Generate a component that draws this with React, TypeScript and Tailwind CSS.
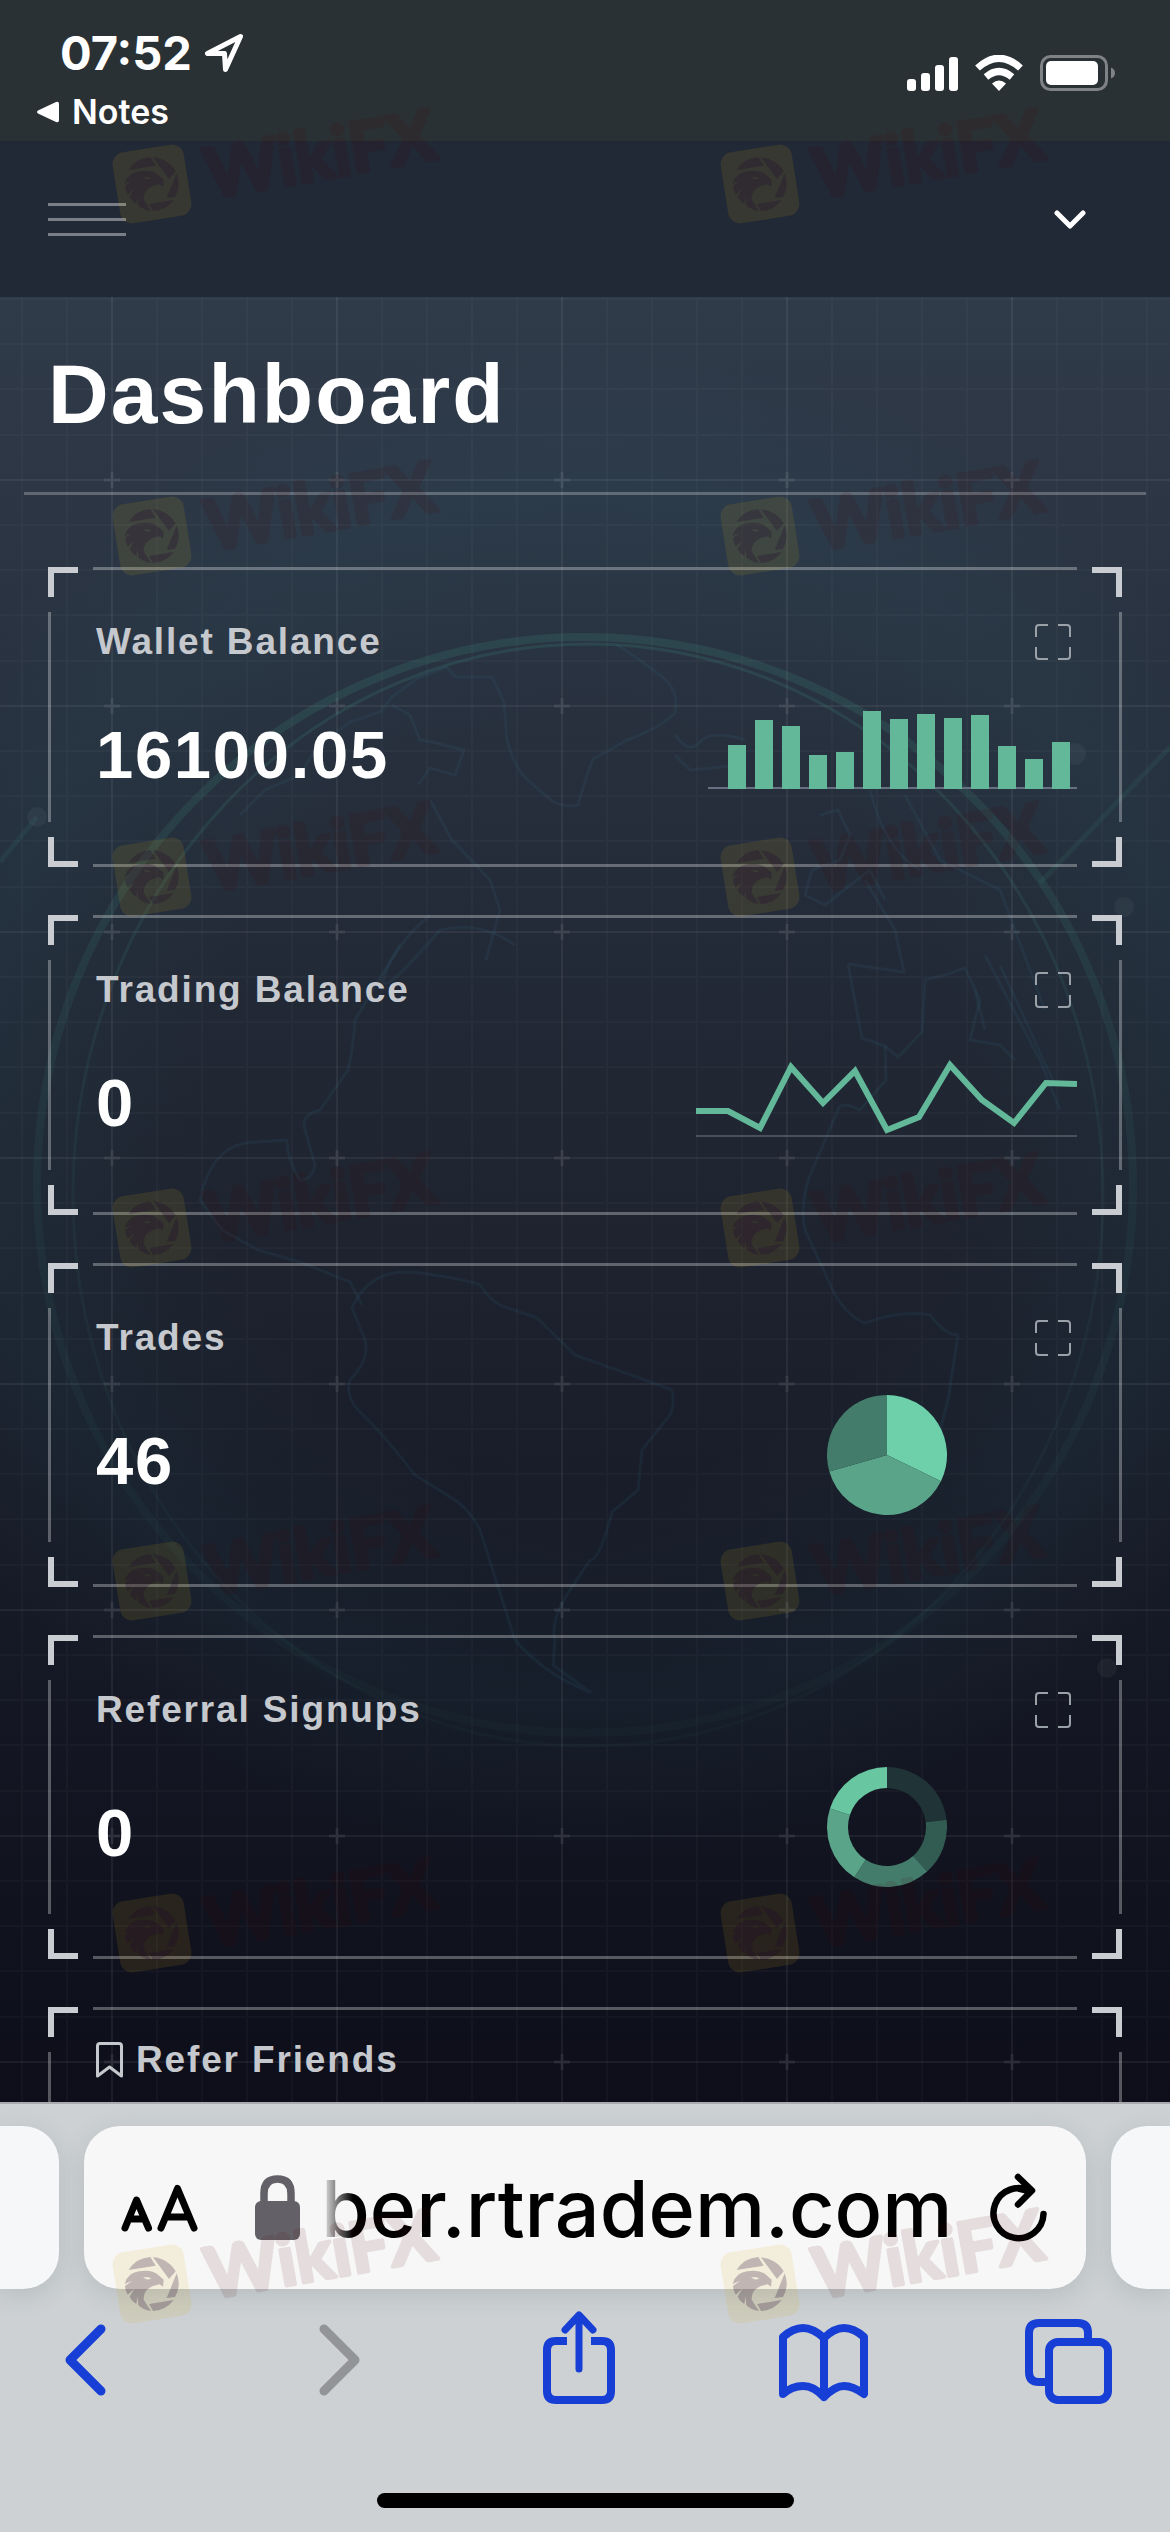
import React from "react";

const BAR_HEIGHTS = [44, 69, 63, 34, 37, 78, 70, 75, 71, 74, 43, 30, 47];

const WATERMARK_ROWS = [184, 536, 877, 1228, 1581, 1933, 2284];

function polar(r: number, deg: number) {
  const a = ((deg - 90) * Math.PI) / 180;
  return `${60 + r * Math.cos(a)} ${60 + r * Math.sin(a)}`;
}

function slice(from: number, to: number, inner: number) {
  const big = to - from > 180 ? 1 : 0;
  const outerArc = `M${polar(60, from)} A60 60 0 ${big} 1 ${polar(60, to)}`;
  if (inner === 0) return `${outerArc} L60 60 Z`;
  return `${outerArc} L${polar(inner, to)} A${inner} ${inner} 0 ${big} 0 ${polar(inner, from)} Z`;
}

function BarChart() {
  return (
    <svg className="block h-[90px] w-[381px]" viewBox="0 0 381 90" role="img" aria-label="Wallet balance history">
      <rect x="12" y="88" width="369" height="2" fill="#667080" />
      {BAR_HEIGHTS.map((h, i) => (
        <rect key={i} x={32 + i * 27} y={90 - h} width="18" height={h} fill="#62b899" />
      ))}
    </svg>
  );
}

function LineChart() {
  return (
    <svg className="block h-[90px] w-[381px]" viewBox="0 0 381 90" role="img" aria-label="Trading balance history">
      <rect x="0" y="88" width="381" height="2" fill="#4a515c" />
      <polyline
        points="0,64 32,64 64,81 95,20 127,56 159,24 191,83 223,70 254,18 286,53 318,76 350,36 381,37"
        fill="none"
        stroke="#62b899"
        strokeWidth="6"
      />
    </svg>
  );
}

function PieChart() {
  return (
    <svg className="block size-[120px]" viewBox="0 0 120 120" role="img" aria-label="Trades split">
      <path d={slice(0, 116, 0)} fill="#6ed0aa" />
      <path d={slice(116, 254, 0)} fill="#5aa489" />
      <path d={slice(254, 360, 0)} fill="#447c6b" />
    </svg>
  );
}

function DonutChart() {
  return (
    <svg className="block size-[120px]" viewBox="0 0 120 120" role="img" aria-label="Referral signups split">
      <path d={slice(0, 83, 39)} fill="#203336" />
      <path d={slice(83, 138, 39)} fill="#325c52" />
      <path d={slice(138, 213, 39)} fill="#447c6b" />
      <path d={slice(213, 288, 39)} fill="#5aa489" />
      <path d={slice(288, 360, 39)} fill="#68c6a1" />
    </svg>
  );
}

function CardFrame() {
  return (
    <div aria-hidden="true" className="pointer-events-none absolute inset-0">
      <i className="absolute inset-x-[45px] top-0 h-[3px] bg-white/30" />
      <i className="absolute inset-x-[45px] bottom-0 h-[3px] bg-white/30" />
      <i className="absolute inset-y-[45px] left-0 w-[3px] bg-white/30" />
      <i className="absolute inset-y-[45px] right-0 w-[3px] bg-white/30" />
      <i className="absolute left-0 top-0 size-[30px] border-l-[6px] border-t-[6px] border-[#c9cdd1]" />
      <i className="absolute right-0 top-0 size-[30px] border-r-[6px] border-t-[6px] border-[#c9cdd1]" />
      <i className="absolute bottom-0 left-0 size-[30px] border-b-[6px] border-l-[6px] border-[#c9cdd1]" />
      <i className="absolute bottom-0 right-0 size-[30px] border-b-[6px] border-r-[6px] border-[#c9cdd1]" />
    </div>
  );
}

function StatCard({
  title,
  value,
  tall,
  chart,
}: {
  title: string;
  value: string;
  tall?: boolean;
  chart: React.ReactNode;
}) {
  return (
    <section className="relative pt-12 pr-[45px] pb-[72px] pl-12">
      <CardFrame />
      <div className="flex items-center justify-between">
        <h2 className="text-[37px] leading-[54px] font-bold tracking-wider text-[#c5c8cd]">{title}</h2>
        <button type="button" aria-label={`Expand ${title}`} className="mr-[6px] size-9">
          <svg viewBox="0 0 36 36" className="size-9" fill="none" stroke="#9ba1a8" strokeWidth="2">
            <path d="M1 13V4q0-3 3-3h9M23 1h9q3 0 3 3v9M35 23v9q0 3-3 3h-9M13 35H4q-3 0-3-3v-9" />
          </svg>
        </button>
      </div>
      <div className={tall ? "mt-[30px] flex h-[120px] items-start justify-between" : "mt-[30px] flex h-24 items-start justify-between"}>
        <p className={tall ? "mt-[30px] text-[67px] leading-[72px] font-bold tracking-wide text-white" : "mt-5 text-[67px] leading-[72px] font-bold tracking-wide text-white"}>
          {value}
        </p>
        <div className="flex w-[381px] justify-center">{chart}</div>
      </div>
    </section>
  );
}

function Backdrop() {
  return (
    <svg aria-hidden="true" className="pointer-events-none absolute left-0 top-0 h-[1805px] w-full" viewBox="0 297 1170 1805" preserveAspectRatio="xMidYMin slice">
      <defs>
        <pattern id="grid" x="0" y="0" width="225" height="226" patternUnits="userSpaceOnUse">
          <path
            d="M0 73H225M0 118H225M0 163H225M0 209H225M22 0V226M67 0V226M157 0V226M202 0V226"
            stroke="#fff"
            strokeOpacity="0.025"
            strokeWidth="2"
          />
          <path d="M0 28H225M112 0V226" stroke="#fff" strokeOpacity="0.06" strokeWidth="2" />
          <path d="M104 28H120M112 20V36" stroke="#fff" strokeOpacity="0.07" strokeWidth="3" />
        </pattern>
        <linearGradient id="rim" x1="0" y1="0" x2="0" y2="1">
          <stop offset="0" stopColor="#3fa48c" stopOpacity="0.16" />
          <stop offset="0.5" stopColor="#3fa48c" stopOpacity="0.07" />
          <stop offset="1" stopColor="#3fa48c" stopOpacity="0.03" />
        </linearGradient>
        <radialGradient id="glow">
          <stop offset="0.5" stopColor="#2f8090" stopOpacity="0" />
          <stop offset="0.8" stopColor="#2f8090" stopOpacity="0.07" />
          <stop offset="1" stopColor="#2f8090" stopOpacity="0" />
        </radialGradient>
      </defs>
      <circle cx="585" cy="1100" r="760" fill="url(#glow)" />
      <rect y="297" width="1170" height="1805" fill="url(#grid)" />
      <circle cx="585" cy="1185" r="548" fill="none" stroke="url(#rim)" strokeWidth="8" />
      <ellipse cx="588" cy="1195" rx="515" ry="551" fill="none" stroke="url(#rim)" strokeWidth="3" />
      <g fill="none" stroke="#3b80a0" strokeOpacity="0.1" strokeWidth="3" strokeLinejoin="round">
        <path d="M447 667L455 677 492 677 504 702 507 740Q515 770 530 782L552 801Q565 808 578 805Q585 780 593 759Q610 750 627 740Q660 728 675 713Q680 690 660 675Q640 660 616 644" />
        <path d="M447 667L418 678 392 697 380 712 350 722 318 745 300 775 265 790 240 815M392 705L410 715 420 740 432 742 464 750 455 775 430 768 418 785M430 800L452 840 490 880 500 910 486 960" />
        <path d="M430 915Q395 945 385 975T440 930Q480 920 515 945" />
        <path d="M400 945L355 1020Q353 1050 348 1070L320 1110Q300 1115 305 1130L315 1165Q312 1180 300 1180Q287 1160 287 1140L245 1143Q210 1150 200 1200L222 1230 258 1250 300 1262 350 1282 362 1305" />
        <path d="M352 1308Q370 1266 420 1273T480 1285Q490 1300 500 1305L537 1318 575 1355 634 1376 672 1390Q675 1405 670 1415L642 1450 638 1490 612 1512Q600 1560 590 1560L570 1590Q550 1620 555 1640L553 1665 590 1692Q545 1675 515 1640L480 1530Q470 1510 455 1500L415 1475Q380 1430 358 1410Q345 1395 350 1380Q370 1360 365 1340Z" />
        <path d="M848 964L904 972 895 930 865 880M848 964L862 1038 885 1046 898 1057 922 1032 925 980 945 975 965 968 980 1000 970 1040 1000 1045 1015 1060" />
        <path d="M885 1046L886 1080 860 1110Q840 1100 838 1110L808 1180Q800 1210 805 1230L835 1295Q850 1318 865 1323Q900 1310 930 1315Q945 1335 958 1335L948 1400 935 1450" />
        <path d="M820 815L838 810 850 835 840 860 812 870 805 895 825 905 850 885 870 870 885 900M870 790Q885 850 920 870M905 795L940 860 1000 890 1045 1010" />
        <path d="M985 955L1040 1060 1060 1110M1000 965L1055 1085M975 990L985 1030M675 735Q690 755 700 742T745 740M675 755L690 770 740 765" />
      </g>
      <g stroke="#3fa48c" strokeOpacity="0.1" strokeWidth="5">
        <path d="M1170 747L1040 883M37 817L0 862" />
      </g>
      <g fill="#b5c7cc" fillOpacity="0.06">
        <circle cx="1075" cy="754" r="11" />
        <circle cx="37" cy="817" r="10" />
        <circle cx="1124" cy="907" r="10" />
        <circle cx="1107" cy="1668" r="10" />
      </g>
    </svg>
  );
}

function Watermarks() {
  return (
    <svg aria-hidden="true" className="pointer-events-none absolute inset-x-0 top-0 h-[2532px] w-full" viewBox="0 0 1170 2532" preserveAspectRatio="xMidYMin slice">
      <defs>
        <g id="eagle">
          <rect x="-36" y="-36" width="72" height="72" rx="12" transform="rotate(-9)" fill="#d2af1b" fillOpacity="0.12" />
          <g transform="scale(0.3333) translate(-187 -258)" fill="#1c0030" fillOpacity="0.24">
            <path d="M117 216A82 82 0 0 1 182 177L198 203Z" />
            <path d="M190 178A82 82 0 0 1 258 220L238 243Z" />
            <path d="M261 226A82 82 0 0 1 256 297L231 300Z" />
            <path d="M252 306A82 82 0 0 1 190 339L178 318Z" />
            <path
              fillRule="evenodd"
              d="M105 258Q112 226 148 220Q185 213 205 230L222 245 220 266 210 259 190 264Q160 276 162 305L184 339Q160 336 146 322L144 296 140 318Q126 310 120 296L134 272 114 290Q106 276 106 264L128 248ZM160 238Q170 248 184 242L178 238Z"
            />
          </g>
        </g>
      </defs>
      {WATERMARK_ROWS.map((y) =>
        [152, 760].map((x) => (
          <g key={`${x}-${y}`} transform={`translate(${x} ${y})`}>
            <use href="#eagle" />
            <text
              x="0"
              y="0"
              transform="translate(58 15) rotate(-10)"
              fontFamily="Lato, sans-serif"
              fontWeight="700"
              fontSize="70"
              fill="#490000"
              stroke="#490000"
              strokeWidth="4"
              strokeLinejoin="round"
              opacity="0.1"
            >
              WikiFX
            </text>
          </g>
        )),
      )}
    </svg>
  );
}

function StatusBar() {
  return (
    <div className="flex h-[141px] shrink-0 items-start justify-between bg-[#2a3134] pr-[54px] pl-9 text-white">
      <div className="flex flex-col items-start pt-[29px]">
        <div className="flex items-center gap-3 pl-6">
          <span className="text-[47px] leading-[48px] font-bold">07:52</span>
          <svg className="h-10 w-10" viewBox="0 0 40 40" fill="none" stroke="currentColor" strokeWidth="5" strokeLinejoin="round">
            <path d="M36.500 3.500L3.500 20.500 20.500 20.500 21.500 36.500Z" />
          </svg>
        </div>
        <button type="button" className="mt-[15px] flex items-center gap-[13px] text-[34px] leading-10 font-semibold">
          <svg className="h-[22px] w-[23px]" viewBox="0 0 23 22" fill="currentColor">
            <path d="M20 1Q23 0 23 3V19Q23 22 20 21L2 12.500Q0 11 2 9.500Z" />
          </svg>
          Notes
        </button>
      </div>
      <div className="flex items-center gap-[17px] pt-[55px]">
        <svg className="h-9 w-[51px]" viewBox="0 0 51 36" fill="currentColor" role="img" aria-label="Signal">
          <rect x="0" y="24" width="9" height="12" rx="3" />
          <rect x="14" y="18" width="9" height="18" rx="3" />
          <rect x="28" y="10" width="9" height="26" rx="3" />
          <rect x="42" y="2" width="9" height="34" rx="3" />
        </svg>
        <svg className="h-9 w-[48px]" viewBox="0 0 48 36" fill="none" stroke="currentColor" role="img" aria-label="Wi-Fi">
          <path d="M2.500 13Q24 -6.500 45.500 13" strokeWidth="7" />
          <path d="M11 22Q24 11 37 22" strokeWidth="7" />
          <path d="M24 36L17 28.500Q24 22.500 31 28.500Z" fill="currentColor" stroke="none" />
        </svg>
        <svg className="h-9 w-[76px]" viewBox="0 0 76 36" role="img" aria-label="Battery">
          <rect x="1.500" y="1.500" width="65" height="33" rx="9" fill="none" stroke="#7f8385" strokeWidth="3" />
          <rect x="6" y="6" width="52" height="24" rx="5" fill="currentColor" />
          <path d="M71 12.500Q75 14 75 18T71 23.500Z" fill="#7f8385" />
        </svg>
      </div>
    </div>
  );
}

function BrowserBar() {
  return (
    <footer className="flex shrink-0 flex-col border-t-2 border-[#a7abae] bg-[#cdd1d3] pb-6">
      <div className="mt-[22px] flex h-[163px] gap-[25px]">
        <div className="w-[59px] rounded-r-[36px] bg-[#f5f7f9] shadow-[0_6px_24px_rgba(90,100,110,0.18)]" />
        <div className="flex flex-1 items-center rounded-[36px] bg-[#f7f7f8] pr-[38px] pl-[37px] shadow-[0_6px_24px_rgba(90,100,110,0.18)]">
          <button type="button" aria-label="Page settings" className="flex h-[76px] w-20 items-center">
            <svg className="h-12 w-[78px]" viewBox="0 0 78 48" fill="none" stroke="#000" strokeWidth="7" strokeLinecap="round" strokeLinejoin="round">
              <path d="M4 44L15.500 16 27.500 44M8 35H23M40 44L56.500 4.500 73 44M45 33H68" />
            </svg>
          </button>
          <svg className="ml-[54px] h-[65px] w-[45px] shrink-0" viewBox="0 0 45 65" role="img" aria-label="Secure">
            <rect x="0" y="26" width="45" height="39" rx="6" fill="#636167" />
            <path d="M9 30V18.500Q9 4 22.500 4T36 18.500V30" fill="none" stroke="#636167" strokeWidth="7.500" />
          </svg>
          <input
            aria-label="Address"
            readOnly
            value="ber.rtradem.com"
            className="ml-[21px] h-[100px] w-0 min-w-0 flex-1 bg-transparent text-[79px] leading-[100px] font-medium text-black outline-none [mask-image:linear-gradient(to_right,transparent_0px,black_32px)]"
          />
          <button type="button" aria-label="Reload" className="h-[70px] w-[58px] shrink-0">
            <svg className="h-[70px] w-[58px]" viewBox="0 0 58 70" fill="none" stroke="#000" strokeWidth="6.500" strokeLinecap="round" strokeLinejoin="round">
              <path d="M53.500 41A25 25 0 1 1 41 18.500L28.500 15.500M28 4L42 17.500 28 31.500" />
            </svg>
          </button>
        </div>
        <div className="w-[59px] rounded-l-[36px] bg-[#f5f7f9] shadow-[0_6px_24px_rgba(90,100,110,0.18)]" />
      </div>
      <nav aria-label="Browser" className="mt-4 flex justify-between pr-14 pl-10 text-[#173fd6]">
        <button type="button" aria-label="Back">
          <svg className="h-[110px] w-[90px]" viewBox="0 0 90 110" fill="none" stroke="currentColor" strokeWidth="9" strokeLinecap="round" strokeLinejoin="round">
            <path d="M61 24L30 55 61 86" />
          </svg>
        </button>
        <button type="button" aria-label="Forward" disabled className="text-[#929497]">
          <svg className="h-[110px] w-[90px]" viewBox="0 0 90 110" fill="none" stroke="currentColor" strokeWidth="9" strokeLinecap="round" strokeLinejoin="round">
            <path d="M38 24L69 55 38 86" />
          </svg>
        </button>
        <button type="button" aria-label="Share">
          <svg className="h-[110px] w-[90px]" viewBox="0 0 90 110" fill="none" stroke="currentColor" strokeWidth="8" strokeLinejoin="round">
            <path d="M35 36H24Q15 36 15 45V86Q15 95 24 95H70Q79 95 79 86V45Q79 36 70 36H59" />
            <path d="M47 12V64M33 25L47 10 61 25" strokeLinecap="round" strokeWidth="7" />
          </svg>
        </button>
        <button type="button" aria-label="Bookmarks">
          <svg className="h-[110px] w-[90px]" viewBox="0 0 90 110" fill="none" stroke="currentColor" strokeWidth="8" strokeLinecap="round" strokeLinejoin="round">
            <path d="M46 33Q35 23 25 23T5 32V89Q14 81 25 81T46 92Q57 81 66 81T86 89V32Q76 23 66 23T46 33V92" />
          </svg>
        </button>
        <button type="button" aria-label="Tabs">
          <svg className="h-[110px] w-[90px]" viewBox="0 0 90 110" fill="none" stroke="currentColor" strokeWidth="8">
            <rect x="25" y="37" width="59" height="58" rx="9" />
            <path d="M25 77H15Q5 77 5 67V28Q5 18 15 18H54Q64 18 64 28V37" />
          </svg>
        </button>
      </nav>
      <div className="mx-auto mt-[78px] h-[15px] w-[417px] rounded-full bg-black" />
    </footer>
  );
}

export default function App() {
  return (
    <div className="relative flex h-screen flex-col overflow-hidden bg-[#0d0e1a] font-['Inter',sans-serif]">
      <StatusBar />
      <header className="flex h-[156px] shrink-0 items-center justify-between bg-[#212836] px-12">
        <button type="button" aria-label="Menu" className="flex w-[78px] flex-col gap-3">
          <i className="h-[3px] bg-[#7a7f87]" />
          <i className="h-[3px] bg-[#7a7f87]" />
          <i className="h-[3px] bg-[#7a7f87]" />
        </button>
        <button type="button" aria-label="Account menu" className="mr-9">
          <svg className="h-5 w-8" viewBox="0 0 32 20" fill="none" stroke="#fff" strokeWidth="5" strokeLinecap="round" strokeLinejoin="round">
            <path d="M3 4L16 17 29 4" />
          </svg>
        </button>
      </header>
      <main className="relative flex-1 overflow-hidden bg-linear-to-b from-[#303b4a] via-[#1e2430] to-[#0d0e1a] font-['Liberation_Sans',Arial,sans-serif]">
        <Backdrop />
        <div className="relative">
          <div className="mx-6 border-b-[3px] border-white/25 px-6 pt-12 pb-12">
            <h1 className="text-[84px] leading-[99px] font-bold tracking-wide text-white">Dashboard</h1>
          </div>
          <div className="flex flex-col gap-12 px-12 pt-[72px]">
            <StatCard title="Wallet Balance" value="16100.05" chart={<BarChart />} />
            <StatCard title="Trading Balance" value="0" chart={<LineChart />} />
            <StatCard title="Trades" value="46" tall chart={<PieChart />} />
            <StatCard title="Referral Signups" value="0" tall chart={<DonutChart />} />
            <section className="relative min-h-[324px] pt-[26px] pr-[45px] pl-12">
              <CardFrame />
              <h2 className="flex items-center gap-[13px] text-[37px] leading-[54px] font-bold tracking-wider text-[#c5c8cd]">
                <svg className="h-9 w-[27px]" viewBox="0 0 27 36" fill="none" stroke="currentColor" strokeWidth="3" strokeLinejoin="round">
                  <path d="M1.500 4Q1.500 1.500 4 1.500H23Q25.500 1.500 25.500 4V34L13.500 25 1.500 34Z" />
                </svg>
                Refer Friends
              </h2>
            </section>
          </div>
        </div>
      </main>
      <BrowserBar />
      <Watermarks />
    </div>
  );
}
